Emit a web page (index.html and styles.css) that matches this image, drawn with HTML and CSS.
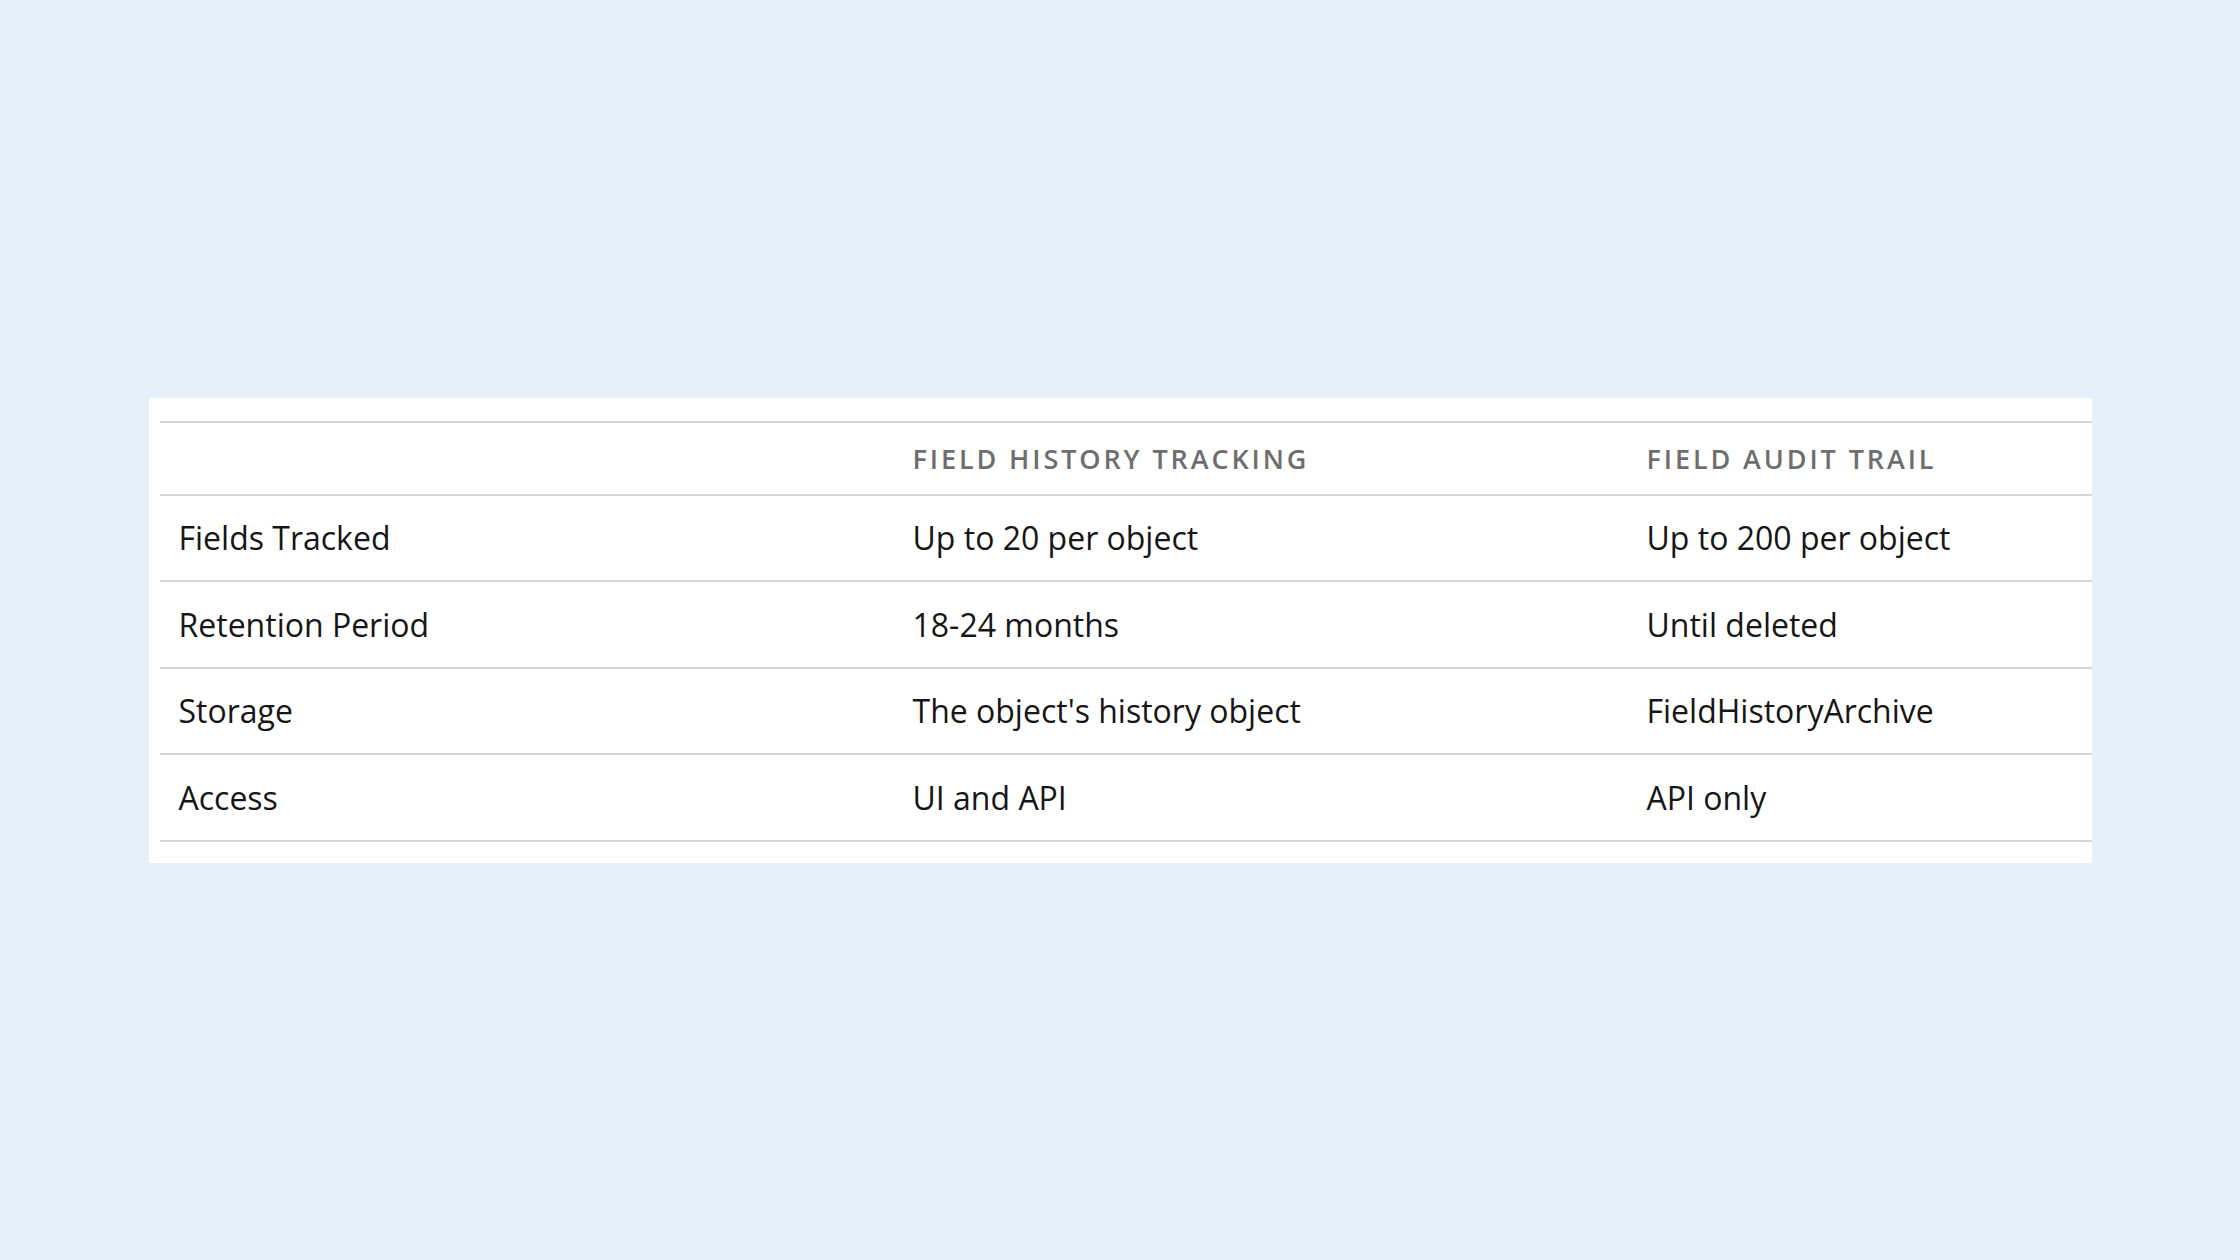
FILE: index.html
```html
<!DOCTYPE html>
<html lang="en">
<head>
<meta charset="utf-8">
<title>Field History Tracking vs Field Audit Trail</title>
<link rel="stylesheet" href="styles.css">
</head>
<body>
<main class="page">
  <section class="card">
    <table class="compare">
      <colgroup>
        <col class="col-label">
        <col class="col-a">
        <col class="col-b">
      </colgroup>
      <thead>
        <tr>
          <th></th>
          <th>Field History Tracking</th>
          <th>Field Audit Trail</th>
        </tr>
      </thead>
      <tbody>
        <tr>
          <td>Fields Tracked</td>
          <td>Up to 20 per object</td>
          <td>Up to 200 per object</td>
        </tr>
        <tr>
          <td>Retention Period</td>
          <td>18-24 months</td>
          <td>Until deleted</td>
        </tr>
        <tr>
          <td>Storage</td>
          <td>The object's history object</td>
          <td>FieldHistoryArchive</td>
        </tr>
        <tr>
          <td>Access</td>
          <td>UI and API</td>
          <td>API only</td>
        </tr>
      </tbody>
    </table>
  </section>
</main>
</body>
</html>
```

FILE: styles.css
```css
html, body {
  margin: 0;
  padding: 0;
}

body {
  background: #e4f1fa;
  font-family: "Open Sans", "Noto Sans", sans-serif;
  color: #161616;
}

.page {
  min-height: 100vh;
  display: flex;
  align-items: center;
  justify-content: center;
}

.card {
  background: #ffffff;
  width: 1943px;
  box-sizing: border-box;
  padding: 23px 0 21px 11px;
}

.compare {
  width: 100%;
  border-collapse: collapse;
  table-layout: fixed;
}

.col-label { width: 734px; }
.col-a { width: 734px; }
.col-b { width: auto; }

.compare th,
.compare td {
  text-align: left;
  padding: 0 0 0 19px;
  border-top: 2px solid #d6d6d6;
  vertical-align: middle;
}

.compare tbody tr:last-child td {
  border-bottom: 2px solid #d6d6d6;
}

.compare th {
  height: 71px;
  font-size: 27px;
  font-weight: 600;
  letter-spacing: 2.9px;
  text-transform: uppercase;
  color: #6e6e6e;
}

.compare td {
  height: 84.5px;
  font-size: 32px;
  font-weight: 400;
}
```
